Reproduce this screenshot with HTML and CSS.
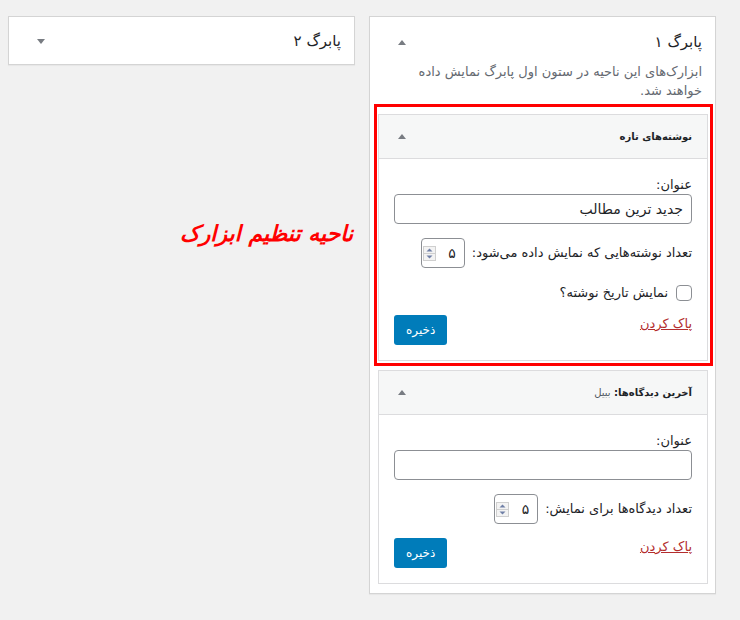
FILE: index.html
```html
<!DOCTYPE html>
<html lang="fa" dir="rtl">
<head>
    <meta charset="UTF-8">
    <meta name="viewport" content="width=device-width, initial-scale=1.0">
    <title>ابزارک‌ها</title>
    <link rel="stylesheet" href="styles.css">
</head>
<body>
    <div class="screen">
        <div class="sidebar">
            <div class="sidebar-name">
                <h2>پابرگ ۱</h2>
                <span class="toggle up"></span>
            </div>
            <p class="sidebar-description">ابزارک‌های این ناحیه در ستون اول پابرگ نمایش داده خواهند شد.</p>

            <div class="widgets">
                <div class="highlight">
                    <div class="widget">
                        <div class="widget-top">
                            <h3>نوشته‌های تازه</h3>
                            <span class="toggle up"></span>
                        </div>
                        <div class="widget-inside">
                            <p class="field">
                                <label>عنوان:</label>
                                <span class="text-input">جدید ترین مطالب</span>
                            </p>
                            <p class="field inline">
                                <label>تعداد نوشته‌هایی که نمایش داده می‌شود:</label>
                                <span class="num-input">
                                    <span class="num-value">۵</span>
                                    <svg class="spinner" width="13" height="15" viewBox="0 0 13 15">
                                        <rect x="0.5" y="0.5" width="12" height="14" fill="#f3f3f3" stroke="#cfcfcf"/>
                                        <line x1="0" y1="7.5" x2="13" y2="7.5" stroke="#cfcfcf"/>
                                        <path d="M3.5 5.5 L6.5 2.5 L9.5 5.5 Z" fill="#6f7fa6"/>
                                        <path d="M3.5 9.5 L6.5 12.5 L9.5 9.5 Z" fill="#6f7fa6"/>
                                    </svg>
                                </span>
                            </p>
                            <p class="field inline check">
                                <span class="checkbox"></span>
                                <label>نمایش تاریخ نوشته؟</label>
                            </p>
                            <div class="widget-control">
                                <a href="#" class="delete">پاک کردن</a>
                                <button type="button" class="save">ذخیره</button>
                            </div>
                        </div>
                    </div>
                </div>

                <div class="widget">
                    <div class="widget-top">
                        <h3>آخرین دیدگاه‌ها: <span class="in-title">ببیل</span></h3>
                        <span class="toggle up"></span>
                    </div>
                    <div class="widget-inside">
                        <p class="field">
                            <label>عنوان:</label>
                            <span class="text-input"></span>
                        </p>
                        <p class="field inline">
                            <label>تعداد دیدگاه‌ها برای نمایش:</label>
                            <span class="num-input">
                                <span class="num-value">۵</span>
                                <svg class="spinner" width="13" height="15" viewBox="0 0 13 15">
                                    <rect x="0.5" y="0.5" width="12" height="14" fill="#f3f3f3" stroke="#cfcfcf"/>
                                    <line x1="0" y1="7.5" x2="13" y2="7.5" stroke="#cfcfcf"/>
                                    <path d="M3.5 5.5 L6.5 2.5 L9.5 5.5 Z" fill="#6f7fa6"/>
                                    <path d="M3.5 9.5 L6.5 12.5 L9.5 9.5 Z" fill="#6f7fa6"/>
                                </svg>
                            </span>
                        </p>
                        <div class="widget-control">
                            <a href="#" class="delete">پاک کردن</a>
                            <button type="button" class="save">ذخیره</button>
                        </div>
                    </div>
                </div>
            </div>
        </div>

        <div class="sidebar closed">
            <div class="sidebar-name">
                <h2>پابرگ ۲</h2>
                <span class="toggle down"></span>
            </div>
        </div>

        <div class="callout">ناحیه تنظیم ابزارک</div>
    </div>
</body>
</html>
```

FILE: styles.css
```css
body {
    margin: 0;
    background: #f1f1f1;
    font-family: "DejaVu Sans", sans-serif;
    font-size: 13px;
    color: #1d2327;
}
.screen {
    position: relative;
    display: flex;
    align-items: flex-start;
    gap: 14px;
    padding: 16px 24px 0 8px;
    height: 620px;
    box-sizing: border-box;
}
.sidebar {
    width: 347px;
    box-sizing: border-box;
    background: #fff;
    border: 1px solid #d4d4d4;
    box-shadow: 0 1px 1px rgba(0, 0, 0, 0.04);
    padding-bottom: 9px;
}
.sidebar.closed {
    padding-bottom: 14px;
}
.sidebar-name {
    display: flex;
    justify-content: space-between;
    align-items: center;
    padding: 15px 13px 0 28px;
}
.sidebar-name h2 {
    margin: 0;
    font-size: 15px;
    font-weight: normal;
    line-height: 20px;
}
.sidebar.closed .sidebar-name h2 {
    line-height: 18px;
}
.sidebar-description {
    margin: 10px 0 0;
    padding: 0 13px 0 14px;
    color: #646970;
    font-size: 13px;
    line-height: 19px;
}
.toggle {
    width: 0;
    height: 0;
    border-left: 4px solid transparent;
    border-right: 4px solid transparent;
}
.toggle.up {
    border-bottom: 5px solid #787c82;
}
.toggle.down {
    border-top: 5px solid #787c82;
}
.widgets {
    padding: 0 7px 0 8px;
    margin-top: 4px;
}
.highlight {
    border: 3px solid #ff0000;
    padding: 7px 2px 2px 1px;
    margin: 0 -5px 0 -4px;
}
.widget {
    background: #fff;
    border: 1px solid #dcdcde;
}
.highlight + .widget {
    margin-top: 4px;
}
.widget-top {
    display: flex;
    justify-content: space-between;
    align-items: center;
    height: 43px;
    padding: 0 15px 0 19px;
    background: #f6f7f7;
    border-bottom: 1px solid #dcdcde;
}
.widget-top h3 {
    margin: 0;
    font-size: 10px;
    font-weight: bold;
}
.in-title {
    font-weight: normal;
    color: #50575e;
}
.widget-inside {
    padding: 0 15px 15px;
}
.field {
    margin: 0 0 14px;
    line-height: 18px;
}
.field:first-child {
    margin-top: 17px;
}
.field label {
    display: block;
}
.text-input {
    display: block;
    height: 30px;
    box-sizing: border-box;
    border: 1px solid #8c8f94;
    border-radius: 4px;
    padding: 0 8px;
    line-height: 28px;
    font-size: 14px;
}
.field.inline {
    display: flex;
    align-items: center;
    gap: 7px;
}
.num-input {
    display: flex;
    align-items: center;
    justify-content: space-between;
    width: 44px;
    height: 30px;
    box-sizing: border-box;
    border: 1px solid #8c8f94;
    border-radius: 4px;
    padding: 0 8px 0 1px;
    font-size: 14px;
}
.field.check {
    gap: 8px;
    margin-top: 17px;
    line-height: 16px;
}
.checkbox {
    width: 16px;
    height: 16px;
    box-sizing: border-box;
    border: 1px solid #8c8f94;
    border-radius: 4px;
    background: #fff;
}
.widget-control {
    display: flex;
    justify-content: space-between;
    align-items: flex-start;
}
.delete {
    color: #b32d2e;
    line-height: 18px;
    text-decoration: underline;
}
.save {
    height: 30px;
    padding: 0 12px;
    border: none;
    border-radius: 3px;
    background: #007cba;
    color: #fff;
    font-family: "DejaVu Sans", sans-serif;
    font-size: 12px;
}
.callout {
    position: absolute;
    left: 180px;
    top: 221px;
    color: #ff0000;
    font-size: 22px;
    font-weight: bold;
    font-style: italic;
}
```
